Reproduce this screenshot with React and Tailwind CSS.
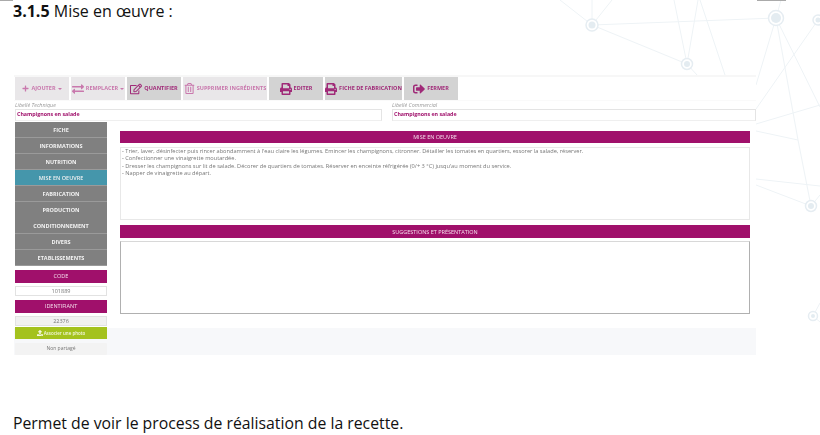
import { FaPlus, FaExchangeAlt, FaRegEdit, FaRegTrashAlt, FaPrint, FaSignOutAlt, FaUpload } from 'react-icons/fa';

const tools = [
    { label: 'AJOUTER', caret: true, Icon: FaPlus, w: 'w-[54px]', off: true, size: 'h-[7px] w-[7px]' },
    { label: 'REMPLACER', caret: true, Icon: FaExchangeAlt, w: 'w-[54px]', off: true, size: 'h-3 w-3' },
    { label: 'QUANTIFIER', Icon: FaRegEdit, w: 'w-[54px]', size: 'h-3 w-3' },
    { label: 'SUPPRIMER INGRÉDIENTS', Icon: FaRegTrashAlt, w: 'w-[84px]', off: true, size: 'h-[11px] w-[11px]' },
    { label: 'EDITER', Icon: FaPrint, w: 'w-[54px]', size: 'h-3 w-3' },
    { label: 'FICHE DE FABRICATION', Icon: FaPrint, w: 'w-[77px]', size: 'h-3 w-3' },
    { label: 'FERMER', Icon: FaSignOutAlt, w: 'w-[54px]', size: 'h-3 w-3' },
];

const menu = ['FICHE', 'INFORMATIONS', 'NUTRITION', 'MISE EN OEUVRE', 'FABRICATION', 'PRODUCTION', 'CONDITIONNEMENT', 'DIVERS', 'ETABLISSEMENTS'];

const steps = [
    "- Trier, laver, désinfecter puis rincer abondamment à l'eau claire les légumes. Emincer les champignons, citronner. Détailler les tomates en quartiers, essorer la salade, réserver.",
    '- Confectionner une vinaigrette moutardée.',
    "- Dresser les champignons sur lit de salade. Décorer de quartiers de tomates. Réserver en enceinte réfrigérée (0/+ 3 °C) jusqu'au moment du service.",
    '- Napper de vinaigrette au départ.',
];

const nodes = [[592, 25, 6], [776, 18, 7.5], [687, 64, 5.5], [818, 20, 5], [811, 206, 5.5], [813, 316, 4.5]];
const links = [
    [592, 25, 776, 18], [592, 25, 687, 64], [592, 25, 560, 0], [592, 25, 592, 0], [592, 25, 612, 0],
    [687, 64, 674, 0], [687, 64, 698, 0], [700, 0, 725, 75], [687, 64, 697, 75],
    [776, 18, 756, 85], [776, 18, 798, 140], [776, 18, 820, 107], [776, 18, 781, 0],
    [818, 20, 756, 109], [756, 124, 820, 105], [756, 131, 798, 140], [798, 140, 811, 206],
    [756, 179, 820, 186], [756, 185, 811, 206], [811, 206, 820, 195], [813, 316, 820, 303], [813, 316, 820, 322],
];

const Network = () => (
    <svg className="absolute inset-0" width="820" height="435" fill="none">
        {links.map(([a, b, c, d], i) => (
            <line key={i} x1={a} y1={b} x2={c} y2={d} stroke="#eef3f6" strokeWidth="1" />
        ))}
        {nodes.map(([x, y, r], i) => (
            <g key={i}>
                <circle cx={x} cy={y} r={r} fill="#fff" stroke="#e6edf2" strokeWidth="1.5" />
                <circle cx={x} cy={y} r={r - 2.5} fill="#e4ecf1" />
            </g>
        ))}
    </svg>
);

export default function App() {
    return (
        <div className="relative h-[435px] w-[820px] overflow-hidden bg-white font-['Open_Sans',sans-serif]">
            <Network />
            <div className="absolute left-0 top-0 h-px w-[13px] bg-[#aaa]" />
            <div className="absolute left-[757px] top-0 h-px w-[29px] bg-[#aaa]" />

            <div className="relative flex h-full flex-col">
                <h1 className="ml-[13px] mt-px text-[16px] leading-[20px] text-[#111]">
                    <b>3.1.5</b> Mise en œuvre :
                </h1>

                <div className="ml-[14px] mt-[54px] flex h-[280px] w-[742px] shrink-0 flex-col border-t-2 border-[#f7f7f7] bg-white blur-[0.4px]">
                    <div className="flex h-[24px] shrink-0 gap-[2px] border-b border-[#fafafa] pl-px">
                        {tools.map(({ label, caret, Icon, w, off, size }) => (
                            <div
                                key={label}
                                className={`flex ${w} items-center justify-center gap-[2px] whitespace-nowrap text-[5.5px] font-bold ${off ? 'bg-[#e9e7e9] text-[#c978ad]' : 'bg-[#d3d3d3] text-[#a02a78]'}`}
                            >
                                <Icon className={`${size} shrink-0`} />
                                {label}
                                {caret && <span className="border-x-[2px] border-t-[2px] border-x-transparent border-t-current" />}
                            </div>
                        ))}
                    </div>

                    <div className="ml-px mt-px grid shrink-0 grid-cols-[367px_364px] gap-x-[10px]">
                        {['Libellé Technique', 'Libellé Commercial'].map((t) => (
                            <div key={t}>
                                <div className="h-[6px] text-[5.4px] italic leading-[6px] text-[#999]">{t}</div>
                                <div className="mt-px flex h-[12px] items-center border border-[#e4e4e4] border-b-[#efefef] px-[1px] text-[5.3px] font-bold text-[#a0106b]">
                                    Champignons en salade
                                </div>
                            </div>
                        ))}
                    </div>

                    <div className="relative mt-px flex flex-1">
                        <div className="absolute inset-x-0 bottom-0 h-[27px] bg-[#f7f8fa]" />

                        <aside className="relative ml-px flex w-[92px] flex-col">
                            {menu.map((m) => (
                                <div
                                    key={m}
                                    className={`flex h-4 items-center justify-center pt-px text-[5.5px] font-bold text-[#f2f2f2] ${m === 'PRODUCTION' ? '' : 'border-b border-[#9a9a9a]'} ${m === 'MISE EN OEUVRE' ? 'bg-[#4596ab] font-semibold' : 'bg-[#808080]'}`}
                                >
                                    {m}
                                </div>
                            ))}
                            <div className="mt-[4px] flex h-[13px] items-center justify-center bg-[#a0106b] text-[5.5px] text-[#f4dfec]">CODE</div>
                            <div className="mt-[3px] flex h-[10px] items-center justify-center border border-[#e2e2e2] bg-white text-[5.5px] text-[#777]">101889</div>
                            <div className="mt-[4px] flex h-[13px] items-center justify-center bg-[#a0106b] text-[5.5px] text-[#f4dfec]">IDENTIFIANT</div>
                            <div className="mt-[3px] flex h-[10px] items-center justify-center border border-[#e2e2e2] bg-[#f1f1f1] text-[5.5px] text-[#777]">22376</div>
                            <div className="mt-px flex h-[12px] items-center justify-center gap-[1px] bg-[#a4c21e] text-[4.5px] font-semibold text-[#f4f8e0]">
                                <FaUpload className="h-[6px] w-[6px]" />
                                Associer une photo
                            </div>
                            <div className="mt-[4px] flex h-[12px] items-center justify-center rounded-[1px] bg-[#f3f3f3] text-[5px] text-[#777]">Non partagé</div>
                        </aside>

                        <main className="relative ml-[13px] flex w-[630px] flex-col pt-[9px]">
                            <div className="flex h-[12px] items-center justify-center pt-px text-[5.5px] bg-[#a0106b] text-[#f4dfec]">MISE EN OEUVRE</div>
                            <div className="mt-[4px] h-[73px] border border-[#e8e8e8] px-[1px] text-[5.65px] leading-[7.3px] text-[#777]">
                                {steps.map((s) => <div key={s}>{s}</div>)}
                            </div>
                            <div className="mt-[5px] flex h-[13px] items-center justify-center pt-px text-[5.5px] bg-[#a0106b] text-[#f4dfec]">SUGGESTIONS ET PRÉSENTATION</div>
                            <div className="mt-[3px] h-[73px] border border-[#b0b0b0] border-t-[#d8d8d8] bg-white" />
                        </main>
                    </div>
                </div>

                <p className="ml-[13px] mt-[58px] text-[15.8px] leading-[20px] text-[#111]">
                    Permet de voir le process de réalisation de la recette.
                </p>
            </div>
        </div>
    );
}
